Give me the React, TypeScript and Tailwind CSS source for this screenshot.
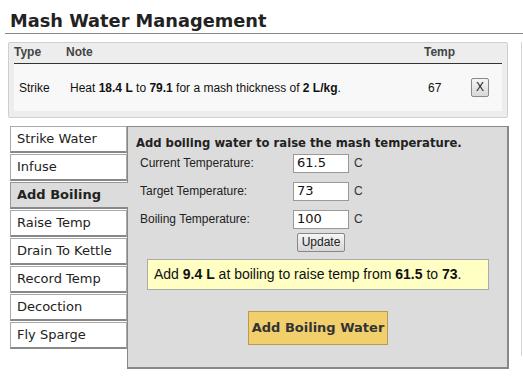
const tabs = [
  "Strike Water",
  "Infuse",
  "Add Boiling",
  "Raise Temp",
  "Drain To Kettle",
  "Record Temp",
  "Decoction",
  "Fly Sparge",
];

const fields = [
  { label: "Current Temperature:", value: "61.5" },
  { label: "Target Temperature:", value: "73" },
  { label: "Boiling Temperature:", value: "100" },
];

export default function App() {
  const active = "Add Boiling";
  return (
    <div className="w-[523px] h-[383px] bg-white overflow-hidden relative font-['Liberation_Sans',Arial,sans-serif] text-[12px] text-[#222]">
      <div className="ml-[5px] border-b border-[#888] pl-[5px] pt-[10px] pb-[2px]">
        <h1 className="font-['DejaVu_Sans',Verdana,sans-serif] font-bold text-[17.8px] leading-[21px] text-[#222]">
          Mash Water Management
        </h1>
      </div>

      <div className="flex">
        <div className="w-[513px]">
          {/* steps table */}
          <div className="ml-[8px] mt-[8px] w-[500px] h-[76px] border border-[#cfcfcf] rounded-[2px] bg-[#ededed] px-[5px] pt-[3px]">
            <div className="flex h-[18px] items-end pb-[2px] border-b border-[#333] font-bold text-[#444]">
              <span className="w-[52px]">Type</span>
              <span className="w-[358px]">Note</span>
              <span>Temp</span>
            </div>
            <div className="flex items-center h-[47px] bg-[#f8f8f8] text-[#111]">
              <span className="w-[56px] pl-[5px]">Strike</span>
              <span className="w-[358px]">
                Heat <b>18.4 L</b> to <b>79.1</b> for a mash thickness of <b>2 L/kg</b>.
              </span>
              <span className="w-[43px]">67</span>
              <button className="w-[18px] h-[19px] border border-[#888] rounded-[2px] bg-gradient-to-b from-[#f6f6f6] to-[#d8d8d8] text-[12px] leading-[17px] text-[#222]">
                X
              </button>
            </div>
          </div>

          {/* tabs + panel */}
          <div className="flex ml-[10px] mt-[8px]">
            <div className="w-[117px] flex flex-col font-['DejaVu_Sans',Verdana,sans-serif] text-[13px]">
              {tabs.map((t) =>
                t === active ? (
                  <div
                    key={t}
                    className="h-[27px] mb-[1px] pl-[6px] flex items-center bg-[#dcdcdc] border-l border-t border-[#999] border-b-2 border-b-[#888] font-bold text-[#222] relative z-10 -mr-px"
                  >
                    {t}
                  </div>
                ) : (
                  <div
                    key={t}
                    className="h-[27px] mb-[1px] pl-[6px] flex items-center bg-white border border-[#aaa] border-b-2 border-b-[#888] text-[#222]"
                  >
                    {t}
                  </div>
                ),
              )}
            </div>
            <div className="w-[382px] h-[243px] bg-[#dcdcdc] border border-[#888] border-r-2 border-b-2 pl-[8px] pt-[9px]">
              <div className="font-['DejaVu_Sans',Verdana,sans-serif] font-bold text-[11.6px] leading-[15px] text-[#222]">
                Add boiling water to raise the mash temperature.
              </div>
              <div className="pl-[4px] -mt-[2px]">
                {fields.map((f) => (
                  <div key={f.label} className="flex items-center h-[28px]">
                    <span className="w-[153px] text-[#222]">{f.label}</span>
                    <input
                      readOnly
                      value={f.value}
                      className="w-[56px] h-[19px] border border-[#999] bg-white px-[3px] font-['DejaVu_Sans',Verdana,sans-serif] text-[13px] text-[#111] outline-none"
                    />
                    <span className="ml-[5px] text-[#333]">C</span>
                  </div>
                ))}
                <button className="ml-[157px] -mt-[1px] w-[48px] h-[19px] border border-[#888] rounded-[2px] bg-gradient-to-b from-[#f6f6f6] to-[#d6d6d6] text-[12px] leading-[17px] text-[#222]">
                  Update
                </button>
              </div>
              <div className="ml-[11px] mt-[7px] w-[342px] h-[31px] bg-[#ffffc4] border border-[#aaa] flex items-center pl-[6px] text-[14px] text-[#111]">
                <span>
                  Add <b>9.4 L</b> at boiling to raise temp from <b>61.5</b> to <b>73</b>.
                </span>
              </div>
              <div className="flex mt-[21px]">
                <button className="ml-[112px] w-[140px] h-[34px] bg-[#f1cf6c] border border-[#b89a55] font-['DejaVu_Sans',Verdana,sans-serif] font-bold text-[13px] text-[#333]">
                  Add Boiling Water
                </button>
              </div>
            </div>
          </div>
        </div>
        <div className="mt-[8px] ml-[8px] w-px h-[314px] bg-[#d4d4d4]" />
      </div>
    </div>
  );
}
